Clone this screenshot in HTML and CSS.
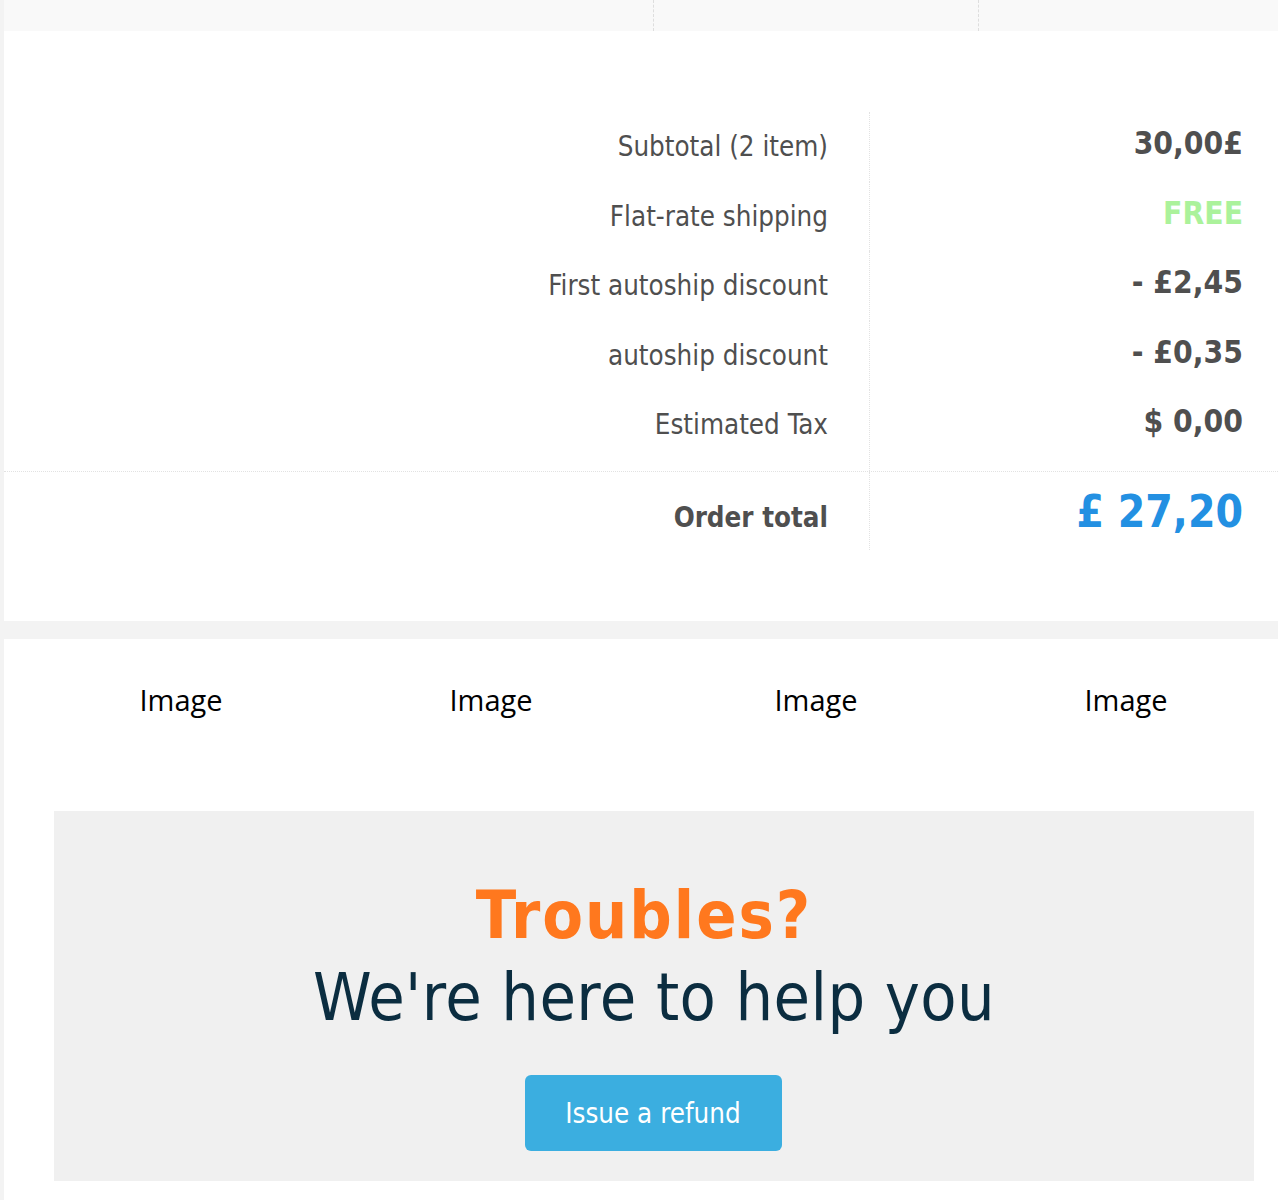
FILE: index.html
```html
<!DOCTYPE html>
<html lang="en">
<head>
<meta charset="utf-8">
<title>Order summary</title>
<link rel="stylesheet" href="styles.css">
</head>
<body>
<div class="page">
  <div class="top-strip">
    <div class="strip-cell strip-a"></div>
    <div class="strip-cell strip-b"></div>
    <div class="strip-cell strip-c"></div>
  </div>

  <section class="panel summary">
    <div class="sum-rows">
      <div class="row"><div class="lbl">Subtotal (2 item)</div><div class="val">30,00£</div></div>
      <div class="row"><div class="lbl">Flat-rate shipping</div><div class="val free">FREE</div></div>
      <div class="row"><div class="lbl">First autoship discount</div><div class="val">- £2,45</div></div>
      <div class="row"><div class="lbl">autoship discount</div><div class="val">- £0,35</div></div>
      <div class="row last"><div class="lbl">Estimated Tax</div><div class="val">$ 0,00</div></div>
    </div>
    <div class="sum-total">
      <div class="row total-row"><div class="lbl">Order total</div><div class="val">£ 27,20</div></div>
    </div>
  </section>

  <section class="panel lower">
    <div class="images">
      <div class="img-cell">Image</div>
      <div class="img-cell">Image</div>
      <div class="img-cell shifted">Image</div>
      <div class="img-cell shifted">Image</div>
    </div>
    <div class="help">
      <h2 class="help-title">Troubles?</h2>
      <p class="help-sub">We're here to help you</p>
      <a class="btn" href="#">Issue a refund</a>
    </div>
  </section>
</div>
</body>
</html>
```

FILE: styles.css
```css
html, body {
  margin: 0;
  padding: 0;
}
body {
  background: #f3f3f3;
  font-family: "DejaVu Sans Condensed", "DejaVu Sans", sans-serif;
  color: #4f4f4f;
  overflow: hidden;
}
.page {
  margin-left: 4px;
  width: 1274px;
}
.top-strip {
  display: flex;
  height: 31px;
  background: #f9f9f9;
}
.strip-a { width: 649px; }
.strip-b { width: 324px; border-left: 1px dashed #dedede; }
.strip-c { flex: 1; border-left: 1px dashed #dedede; }

.panel {
  background: #fff;
}
.summary {
  padding-top: 81px;
  padding-bottom: 71px;
  margin-bottom: 18px;
}
.row {
  display: flex;
  height: 69.5px;
}
.row.last {
  height: 80.5px;
}
.lbl {
  width: 824px;
  padding-right: 41px;
  border-right: 1px dotted #e2e2e2;
  text-align: right;
  font-size: 27.5px;
  line-height: 69.5px;
}
.val {
  flex: 1;
  padding-right: 35px;
  text-align: right;
  font-weight: bold;
  font-size: 31.5px;
  line-height: 63px;
}
.free { color: #abf29b; }
.sum-total {
  border-top: 1px dotted #e2e2e2;
}
.row.total-row {
  height: 78px;
}
.total-row .lbl {
  line-height: 90px;
  font-weight: bold;
  font-size: 27.5px;
}
.total-row .val {
  line-height: 80px;
  font-size: 44px;
  color: #2390e2;
}

.lower {
  padding-top: 42px;
  padding-bottom: 20px;
}
.images {
  display: grid;
  grid-template-columns: 310px 310px 310px 310px;
  padding-left: 22px;
}
.img-cell {
  font-family: "Open Sans", sans-serif;
  font-size: 29px;
  line-height: 38px;
  color: #000;
  text-align: center;
}
.img-cell.shifted {
  margin-left: 15px;
  margin-right: -15px;
}
.help {
  margin: 92px 0 0 50px;
  width: 1200px;
  background: #f0f0f0;
  text-align: center;
  padding: 64px 0 30px;
}
.help-title {
  margin: 0;
  padding-right: 20px;
  font-size: 66px;
  line-height: 82px;
  font-weight: bold;
  letter-spacing: 2px;
  color: #ff781e;
}
.help-sub {
  margin: 0 0 36px;
  font-size: 66px;
  line-height: 82px;
  letter-spacing: 0.4px;
  color: #0b2d40;
}
.btn {
  display: inline-block;
  width: 257px;
  height: 76px;
  line-height: 76px;
  margin-right: 2px;
  background: #3baee0;
  color: #fff;
  border-radius: 6px;
  font-size: 27.5px;
  text-decoration: none;
  vertical-align: top;
}
```
